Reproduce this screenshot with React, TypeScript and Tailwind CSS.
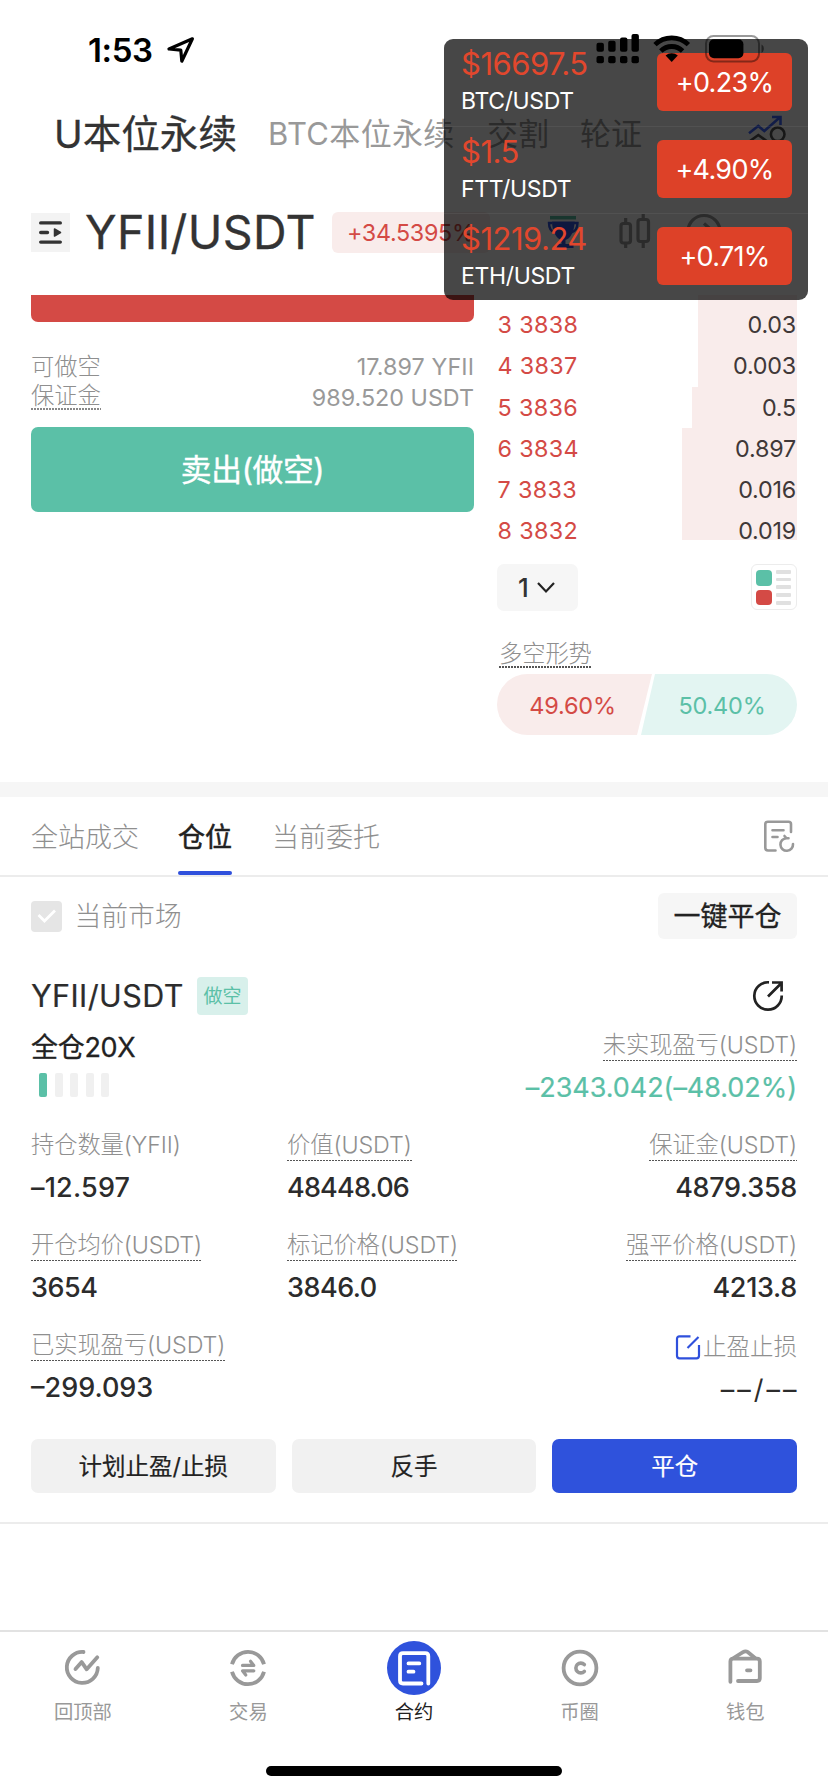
import type { ReactNode } from "react";

function Dotted({ children, className = "", plain = false }: { children: ReactNode; className?: string; plain?: boolean }) {
  return (
    <div className={`w-fit h-[32px] leading-[31px] text-[23.3px] text-[#8f8f8f] font-light tracking-[-0.1px] whitespace-nowrap flex flex-col justify-between ${className}`}>
      <span className="h-[28px]">{children}</span>
      {!plain && <span className="h-[1.5px] shrink-0 w-full bg-[repeating-linear-gradient(90deg,#555_0_1.8px,transparent_1.8px_3px)]" />}
    </div>
  );
}

const asks = [
  { n: "3", price: "3838", amount: "0.03", bar: "w-[99px]" },
  { n: "4", price: "3837", amount: "0.003", bar: "w-[99px]" },
  { n: "5", price: "3836", amount: "0.5", bar: "w-[105px]" },
  { n: "6", price: "3834", amount: "0.897", bar: "w-[115px]" },
  { n: "7", price: "3833", amount: "0.016", bar: "w-[115px]" },
  { n: "8", price: "3832", amount: "0.019", bar: "w-[115px]" },
];

const tickers = [
  { price: "$16697.5", pair: "BTC/USDT", change: "+0.23%" },
  { price: "$1.5", pair: "FTT/USDT", change: "+4.90%" },
  { price: "$1219.24", pair: "ETH/USDT", change: "+0.71%" },
];

function StatusBar() {
  return (
    <div className="h-[94px] flex items-start pl-[88px] pt-[33px]">
      <span className="text-[33px] leading-[34px] font-semibold text-black tracking-[-0.4px] w-[78px]">1:53</span>
      <svg className="w-[30px] h-[30px] mt-[2px]" viewBox="0 0 30 30" fill="none" stroke="#000" strokeWidth="3.2" strokeLinejoin="round">
        <path d="M26.4 3.8 L3 14 L14.8 15.2 L15.8 26.2 Z" />
      </svg>
    </div>
  );
}

function StatusIcons() {
  return (
    <div className="absolute left-[596px] top-[34px] z-20 flex">
      <svg width="172" height="30" viewBox="0 0 172 30">
        <rect x="0.5" y="8.7" width="7.4" height="9" rx="2" />
        <rect x="12.2" y="6.7" width="7.4" height="11" rx="2" />
        <rect x="24" y="3.4" width="7.4" height="14.3" rx="2" />
        <rect x="35.5" y="0" width="7.4" height="17.7" rx="2" />
        <rect x="0.5" y="22" width="7.4" height="7.2" rx="2" />
        <rect x="12.2" y="22" width="7.4" height="7.2" rx="2" />
        <rect x="24" y="22" width="7.4" height="7.2" rx="2" />
        <rect x="35.5" y="22" width="7.4" height="7.2" rx="2" />
        <g fill="none" stroke="#000" strokeWidth="4.8">
          <path d="M59 10.6 A24 24 0 0 1 92.4 10.6" />
          <path d="M64.8 17 A15.5 15.5 0 0 1 86.6 17" />
        </g>
        <path d="M75.7 28 L69.6 21.6 A9 9 0 0 1 81.8 21.6 Z" />
        <rect x="110" y="2" width="53" height="25.5" rx="7.5" fill="none" stroke="#000" strokeOpacity="0.4" strokeWidth="2" />
        <rect x="113" y="5.2" width="34.4" height="19" rx="5" />
        <path d="M165.5 10.5 A5 5 0 0 1 165.5 19 Z" fillOpacity="0.5" />
      </svg>
    </div>
  );
}

function TickerOverlay() {
  return (
    <div className="absolute left-[444px] top-[39px] w-[364px] h-[261px] rounded-[9px] bg-black/[0.72] z-10 flex flex-col">
      {tickers.map((t, i) => (
        <div key={t.pair} className={`h-[87px] flex justify-between pl-[17px] pr-[16px] ${i ? "border-t border-white/[0.06]" : ""}`}>
          <div className="pt-[7px]">
            <div className="text-[31px] leading-[36px] text-[#e2472d] tracking-[-0.5px]">{t.price}</div>
            <div className="text-[23px] leading-[30px] mt-[4px] text-white tracking-[-0.35px]">{t.pair}</div>
          </div>
          <div className={`w-[135px] h-[58px] rounded-[6px] bg-[#dd4128] text-white text-[27px] leading-[59px] text-center tracking-[-0.7px] ${i ? "mt-[13px]" : "mt-[14px]"}`}>{t.change}</div>
        </div>
      ))}
    </div>
  );
}

function Header() {
  return (
    <div className="h-[295px]">
      <StatusBar />
      <div className="h-[80px] flex items-center pl-[54px] pr-[40px] whitespace-nowrap text-[31px] text-[#999]">
        <span className="text-[38.6px] leading-[82px] text-[#333] w-[214px] [-webkit-text-stroke:0.3px_#333]">U本位永续</span>
        <span className="w-[219px] leading-[82px] tracking-[0.35px]">BTC本位永续</span>
        <span className="w-[93px] leading-[82px]">交割</span>
        <span className="leading-[82px]">轮证</span>
        <svg className="ml-auto -mt-[10px] shrink-0" width="43" height="32" viewBox="0 0 43 32" fill="none" strokeWidth="2.6">
          <path d="M4 20.3 L13.3 13 L19.3 18 L35 4.3 M27 4 H35.5 V12" stroke="#3f66ff" />
          <path d="M5 28 L13.3 22 L21.7 28" stroke="#555" />
          <circle cx="32.7" cy="21.3" r="6.8" stroke="#555" />
        </svg>
      </div>
      <div className="h-[116px] flex items-center pl-[31px] whitespace-nowrap">
        <div className="w-[39px] h-[39px] bg-[#f3f3f3]">
          <svg width="39" height="39" viewBox="0 0 39 39" fill="none" stroke="#333" strokeWidth="3.4" strokeLinecap="round">
            <path d="M9.7 9.9 H29.3 M9.7 19.5 H16.5 M9.7 29.1 H29.3" />
            <path d="M23.5 16 L29.5 19.5 L23.5 23 Z" fill="#333" strokeWidth="1.5" strokeLinejoin="round" />
          </svg>
        </div>
        <span className="ml-[15px] w-[247px] text-[46.5px] leading-[50px] text-[#333] tracking-[0.4px] [-webkit-text-stroke:0.3px_#333]">YFII/USDT</span>
        <span className="w-[158px] h-[41px] rounded-[6px] bg-[#f9eceb] pl-[15px] text-[23.3px] leading-[41px] text-[#d44a45] tracking-[-0.3px]">+34.5395%</span>
        <svg className="ml-[56px]" width="180" height="44" viewBox="546 210 180 44" fill="none" stroke="#999" strokeWidth="3.2">
          <path d="M550 217.7 H576" stroke="#5bc0a7" strokeWidth="3.5" />
          <path d="M552 221.5 H574.5 C574.5 232 570 239 565.5 240 V244 H573.5 V248 H557 V244 H561.5 V240 C557 239 552 232 552 221.5 Z" fill="#3456e0" stroke="none" />
          <path d="M552 223 H549 Q549 231 555 232.5 M574 223 H577.5 Q577.5 231 571 232.5" stroke="#3456e0" strokeWidth="2.4" />
          <rect x="621" y="223.5" width="9.5" height="19.5" rx="2.5" />
          <path d="M625.7 218 V223 M625.7 243 V248" />
          <rect x="638" y="219.5" width="10.5" height="22" rx="2.5" />
          <path d="M643.2 214 V219 M643.2 242 V248" />
          <circle cx="704" cy="231.5" r="16" />
          <path d="M695 231.5 H713 L704 223.5" />
        </svg>
      </div>
    </div>
  );
}

function TradePanel() {
  return (
    <div className="h-[487px] flex gap-[23px] pl-[31px] pr-[31px]">
      <div className="w-[443px]">
        <div className="h-[27px] rounded-b-[7px] bg-[#d44a45]" />
        <div className="mt-[31px] h-[28px] flex justify-between text-[23.3px] leading-[28px] text-[#999]">
          <span className="font-light text-[#8f8f8f]">可做空</span>
          <span className="tracking-[0.1px]">17.897 YFII</span>
        </div>
        <div className="mt-px h-[28px] flex justify-between text-[23.3px] leading-[28px] text-[#999]">
          <div className="flex flex-col font-light text-[#8f8f8f]">
            <span className="h-[26px]">保证金</span>
            <span className="h-[1.5px] bg-[repeating-linear-gradient(90deg,#888_0_1.8px,transparent_1.8px_3px)]" />
          </div>
          <span className="leading-[32px]">989.520 USDT</span>
        </div>
        <button className="mt-[17px] block w-full h-[85px] rounded-[7px] bg-[#5bc0a7] text-white text-[30.8px] leading-[85px] text-center tracking-[-0.4px] [-webkit-text-stroke:0.4px_#fff]">卖出(做空)</button>
      </div>
      <div className="w-[300px]">
        <div className="h-[245px] overflow-hidden">
          <div className="h-[9px] w-[99px] ml-auto bg-[#f9eceb]" />
          {asks.map((a) => (
            <div key={a.n} className="h-[41.3px] flex justify-between text-[23.3px] leading-[42px]">
              <span className="pl-[0.5px] text-[#d44a45] tracking-[0.35px]">{a.n} {a.price}</span>
              <span className={`${a.bar} bg-[#f9eceb] text-right pr-[1px] text-[#403838] tracking-[-0.2px]`}>{a.amount}</span>
            </div>
          ))}
        </div>
        <div className="mt-[24px] h-[47px] flex justify-between">
          <div className="w-[81px] h-[47px] rounded-[7px] bg-[#f6f6f6] flex items-center pl-[21px] text-[26px] leading-[47px] text-[#333]">
            <span className="w-[18px] font-[450]">1</span>
            <svg width="20" height="14" viewBox="0 0 20 14" fill="none" stroke="#222" strokeWidth="2.2">
              <path d="M2 2 L10 10.5 L18 2" />
            </svg>
          </div>
          <div className="w-[46px] h-[46px] rounded-[6px] border border-[#ececec] flex gap-[4px] pl-[4px] pt-[5px]">
            <div className="flex flex-col gap-[4px]">
              <div className="w-[16px] h-[15.5px] rounded-[4px] bg-[#5bc0a7]" />
              <div className="w-[16px] h-[15.5px] rounded-[4px] bg-[#d44a45]" />
            </div>
            <div className="flex flex-col gap-[3.9px]">
              {[0, 1, 2, 3, 4].map((i) => (
                <div key={i} className="w-[15px] h-[3.8px] rounded-[1px] bg-[#e0e0e0]" />
              ))}
            </div>
          </div>
        </div>
        <Dotted className="mt-[27px] ml-[2px] !h-[29.5px] w-[95px]">多空形势</Dotted>
        <div className="mt-[6.5px] h-[61px] rounded-full overflow-hidden flex text-[23.5px] leading-[63px] text-center tracking-[-0.2px]">
          <div className="w-[155px] pr-[4px] bg-[#f9eceb] text-[#d44a45] [clip-path:polygon(0_0,100%_0,calc(100%-15px)_100%,0_100%)]">49.60%</div>
          <div className="w-[156px] -ml-[11px] pl-[6px] bg-[#e3f5f2] text-[#5bc0a7] [clip-path:polygon(14px_0,100%_0,100%_100%,0_100%)]">50.40%</div>
        </div>
      </div>
    </div>
  );
}

function Tabs() {
  return (
    <div className="h-[80px] border-b-2 border-[#ececec] flex pl-[31px] pr-[31px] text-[27px] leading-[82px] text-[#8f8f8f] font-light whitespace-nowrap">
      <span className="w-[147px]">全站成交</span>
      <div className="relative w-[54px] h-[78px] font-normal text-[#222] [-webkit-text-stroke:0.5px_#222]">
        仓位
        <div className="absolute bottom-0 left-0 w-[54px] h-[4px] rounded-full bg-[#2f50dc]" />
      </div>
      <span className="ml-[40px]">当前委托</span>
      <svg className="ml-auto mt-[22px]" width="34" height="34" viewBox="0 0 34 34" fill="none" stroke="#999" strokeWidth="2.6" strokeLinecap="round">
        <path d="M12.5 31.5 H5 Q2.3 31.5 2.3 28.8 V5 Q2.3 2.7 5 2.7 H25.5 Q28 2.7 28 5 V13" />
        <path d="M9.5 11.2 H20.5 M9.5 18 H14.5" />
        <path d="M30 25 A6.3 6.3 0 1 1 23.5 19.2 L21.5 17 M23.5 19.2 L25.5 19.2" />
      </svg>
    </div>
  );
}

const valueClass = "mt-[10px] text-[27px] leading-[34px] text-[#2c2c2c] font-[450] whitespace-nowrap";

function Position() {
  return (
    <div className="pl-[31px] pr-[31px]">
      <div className="h-[78px] flex items-center">
        <div className="w-[31px] h-[31px] rounded-[4px] bg-[#e5e5e5] flex items-center justify-center">
          <svg width="20" height="16" viewBox="0 0 20 16" fill="none" stroke="#fff" strokeWidth="2.8">
            <path d="M1.5 7 L7.5 13 L18 2.5" />
          </svg>
        </div>
        <span className="ml-[12.5px] text-[26.8px] leading-[40px] text-[#8f8f8f] font-light">当前市场</span>
        <button className="ml-auto w-[139px] h-[46px] rounded-[6px] bg-[#f6f6f6] text-[27px] leading-[48px] text-[#222] text-center [-webkit-text-stroke:0.3px_#222]">一键平仓</button>
      </div>
      <div className="h-[74px] pt-[8px] flex items-center">
        <span className="text-[30.5px] leading-[40px] text-[#2c2c2c] tracking-[0.4px] w-[166px] whitespace-nowrap [-webkit-text-stroke:0.2px_#2c2c2c]">YFII/USDT</span>
        <span className="w-[51px] h-[38px] rounded-[4px] bg-[#d8f0eb] text-[19px] leading-[40px] text-[#5bc0a7] text-center">做空</span>
        <svg className="ml-auto mr-[12px]" width="34" height="34" viewBox="0 0 34 34" fill="none" stroke="#222" strokeWidth="2.7">
          <path d="M18 3.3 A13.7 13.7 0 1 0 30.7 16.5" />
          <path d="M17 17.5 L30 4.5 M21 3.5 H30.6 V12.5" />
        </svg>
      </div>
      <div className="h-[100px] flex justify-between">
        <div className="pt-px">
          <div className="text-[27px] leading-[36px] h-[34px] text-[#222] tracking-[-0.3px] [-webkit-text-stroke:0.3px_#222]">全仓20X</div>
          <div className="mt-[9px] ml-[8px] flex gap-[7.5px]">
            <div className="w-[8px] h-[24px] rounded-[2px] bg-[#5bc0a7]" />
            {[0, 1, 2, 3].map((i) => (
              <div key={i} className="w-[8px] h-[24px] rounded-[2px] bg-[#f0f0f0]" />
            ))}
          </div>
        </div>
        <div className="flex flex-col items-end">
          <Dotted>未实现盈亏(USDT)</Dotted>
          <div className="mt-[10px] text-[27px] leading-[34px] text-[#5bc0a7] tracking-[-0.05px] whitespace-nowrap [-webkit-text-stroke:0.2px_#5bc0a7]">–2343.042(–48.02%)</div>
        </div>
      </div>
      <div className="grid grid-cols-[256px_255px_255px] auto-rows-[100px]">
        <div><Dotted plain>持仓数量(YFII)</Dotted><div className={`${valueClass} tracking-[0.2px]`}>–12.597</div></div>
        <div><Dotted>价值(USDT)</Dotted><div className={`${valueClass} tracking-[-0.8px]`}>48448.06</div></div>
        <div className="flex flex-col items-end"><Dotted>保证金(USDT)</Dotted><div className={`${valueClass} tracking-[-0.3px]`}>4879.358</div></div>
        <div><Dotted>开仓均价(USDT)</Dotted><div className={`${valueClass} tracking-[-0.5px]`}>3654</div></div>
        <div><Dotted>标记价格(USDT)</Dotted><div className={`${valueClass} tracking-[-0.5px]`}>3846.0</div></div>
        <div className="flex flex-col items-end"><Dotted>强平价格(USDT)</Dotted><div className={`${valueClass} tracking-[-0.3px]`}>4213.8</div></div>
        <div className="col-span-2"><Dotted>已实现盈亏(USDT)</Dotted><div className={`${valueClass} tracking-[0px]`}>–299.093</div></div>
        <div className="flex flex-col items-end">
          <div className="h-[32px] pt-[4px] flex items-center">
            <svg width="27" height="27" viewBox="0 0 27 27" fill="none" stroke="#2f50dc" strokeWidth="2.2">
              <path d="M15.5 2.3 H4.5 Q2 2.3 2 4.8 V21.8 Q2 24.3 4.5 24.3 H21.5 Q24 24.3 24 21.8 V11" />
              <path d="M12.5 14 L23.5 3" />
            </svg>
            <span className="ml-[1px] text-[23.5px] leading-[30px] text-[#8f8f8f] font-light">止盈止损</span>
          </div>
          <div className="mt-[10px] -mr-[2.5px] text-[27px] leading-[38px] text-[#2c2c2c] tracking-[3px] whitespace-nowrap">––/––</div>
        </div>
      </div>
      <div className="mt-[10px] grid grid-cols-3 gap-[16px] text-[23.5px] leading-[55px] text-center text-[#222]">
        <button className="h-[54px] rounded-[7px] bg-[#f1f1f1] [-webkit-text-stroke:0.2px_#222]">计划止盈/止损</button>
        <button className="h-[54px] rounded-[7px] bg-[#f1f1f1] [-webkit-text-stroke:0.2px_#222]">反手</button>
        <button className="h-[54px] rounded-[7px] bg-[#2f52dc] text-white [-webkit-text-stroke:0.2px_#fff]">平仓</button>
      </div>
    </div>
  );
}

function NavItem({ label, active = false, children }: { label: string; active?: boolean; children: ReactNode }) {
  return (
    <div className="flex flex-col items-center pt-[9px]">
      <svg width="54" height="54" viewBox="-27 -27 54 54" fill="none" stroke={active ? "#fff" : "#999"} strokeWidth="3.8" strokeLinecap="round" strokeLinejoin="round">
        {children}
      </svg>
      <span className={`mt-[5px] text-[19.3px] leading-[24px] ${active ? "text-[#222]" : "text-[#999]"}`}>{label}</span>
    </div>
  );
}

function BottomNav() {
  return (
    <div className="mt-[106px] h-[162px] border-t-2 border-[#e2e2e2] flex flex-col">
      <div className="grid grid-cols-5 h-[134px]">
        <NavItem label="回顶部">
          <path d="M0.5 -16 A15.5 15.5 0 1 0 14.8 0" />
          <path d="M-7.5 1 L-1.3 -5.9 L3.7 1.3 L14.3 -10.7" />
        </NavItem>
        <NavItem label="交易">
          <path d="M-16 -3.7 A16.5 16.5 0 0 1 16 -3.7 M-16 3.7 A16.5 16.5 0 0 0 16 3.7" strokeLinecap="butt" />
          <path d="M-5.5 -2.6 H5.8 L2.5 -6.8 M5.8 2.8 H-5.5 L-2.2 7" strokeWidth="3.2" />
        </NavItem>
        <NavItem label="合约" active>
          <circle r="27" fill="#2f52dc" stroke="none" />
          <path d="M7.5 15.5 H-11 Q-14 15.5 -14 12.5 V-11.8 Q-14 -14.8 -11 -14.8 H11.2 Q14.3 -14.8 14.3 -11.8 V15.5" />
          <path d="M-5.5 -4.6 H5.3 M-5.5 3.7 H-0.5" />
        </NavItem>
        <NavItem label="币圈">
          <circle r="16.4" />
          <path d="M4.3 -3.4 A4.9 4.9 0 1 0 4.3 3.4" strokeWidth="3.6" />
        </NavItem>
        <NavItem label="钱包">
          <path d="M-14.6 13.8 V-6.5 Q-14.6 -9.3 -11.8 -9.3 H12 Q14.8 -9.3 14.8 -6.5 V10.3 Q14.8 13 12 13 H-7" />
          <path d="M-11.5 -10 L-2 -15.8 Q0.5 -17.3 3 -15.8 L10 -10 M2 2.3 H5.5" />
        </NavItem>
      </div>
      <div className="mx-auto w-[296px] h-[10px] rounded-full bg-black" />
    </div>
  );
}

export default function App() {
  return (
    <div className="relative w-[828px] h-[1792px] overflow-hidden bg-white font-['Inter','Noto_Sans_CJK_SC',sans-serif]">
      <Header />
      <TradePanel />
      <div className="h-[15px] bg-[#f6f6f6]" />
      <Tabs />
      <Position />
      <div className="mt-[29px] h-[2px] bg-[#ececec]" />
      <BottomNav />
      <TickerOverlay />
      <StatusIcons />
    </div>
  );
}
